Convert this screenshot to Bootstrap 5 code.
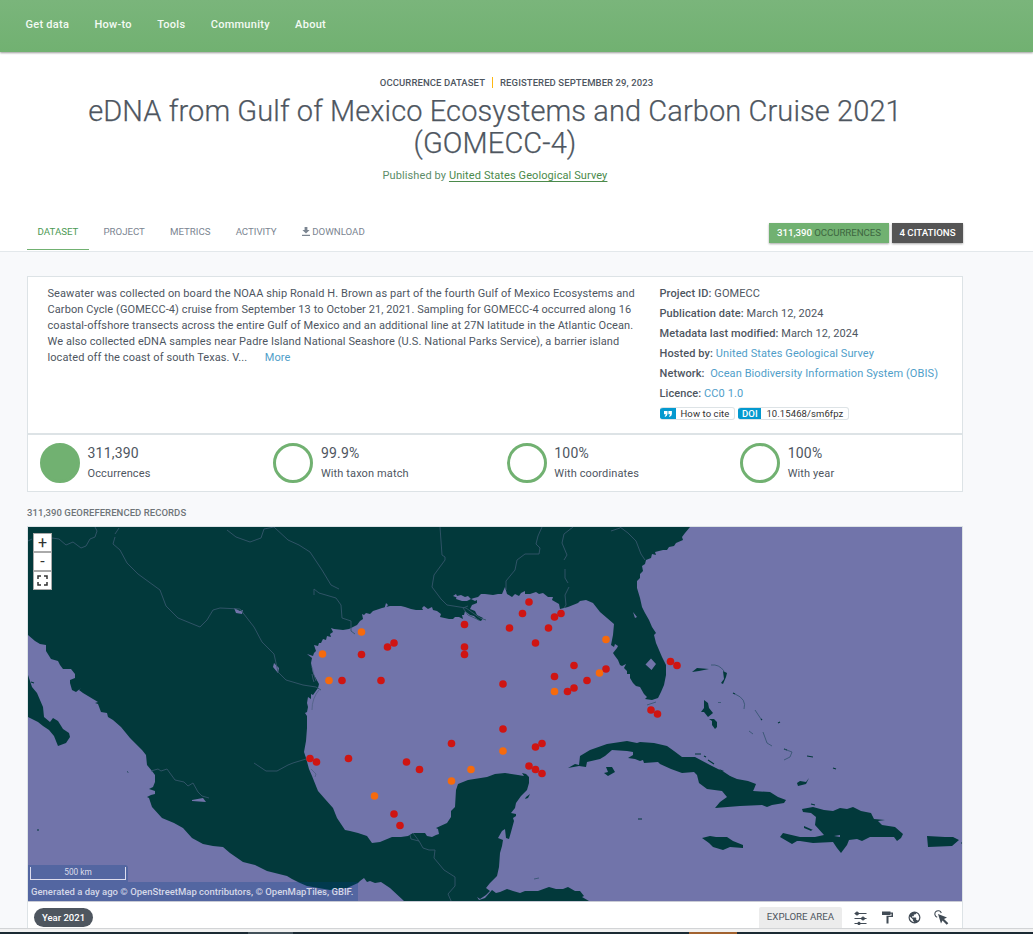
<!DOCTYPE html>
<html lang="en">
<head>
<meta charset="utf-8">
<meta name="viewport" content="width=device-width, initial-scale=1">
<title>eDNA from Gulf of Mexico Ecosystems and Carbon Cruise 2021 (GOMECC-4)</title>
<link href="https://cdn.jsdelivr.net/npm/bootstrap@5.3.0/dist/css/bootstrap.min.css" rel="stylesheet">
<style>
body{font-family:Roboto,"Liberation Sans",sans-serif;font-size:11px;line-height:16px;color:#4e565f;background:#f8f9fb;height:934px;overflow:hidden}
a{text-decoration:none;color:#509ec9}
.topbar{height:52px;background:linear-gradient(#7ab57b,#71b171);box-shadow:0 1px 2px rgba(0,0,0,.4);position:relative}
.topbar .nav{padding:17px 0 0 25.5px;gap:25.3px}
.topbar a{color:#f3faf3;font-weight:500;font-size:11px;line-height:16px;letter-spacing:.27px}
.wrap{width:936px;margin-left:27px}
.hero{height:200px;background:#fff;border-bottom:1px solid #e3e8eb}
.kicker{font-size:9.5px;font-weight:500;padding:23px 0 0 43px;line-height:16px;white-space:nowrap;letter-spacing:.09px}
.kicker span{display:inline-block;line-height:11px}
.kicker span+span{border-left:1px solid #fdb813;margin-left:7px;padding-left:7px}
h1{font-size:29px;line-height:32px;font-weight:300;margin:4px 0 9px;color:#4e565f;letter-spacing:.1px;white-space:nowrap;-webkit-text-stroke:.25px #4e565f}
.pub{color:#5c8c68;letter-spacing:.1px}
.pub a{color:#4b8a4b;text-decoration:underline;text-underline-offset:1.5px}
.tabs{height:38px;margin-top:28px;font-size:9.7px}
.tabs .nav a{display:block;padding:12px 10.6px 0;height:38px;color:#7b8591;line-height:16px;margin-right:4px;white-space:nowrap;letter-spacing:-.02px}
.tabs .nav a.active{color:#4c9a54;border-bottom:1px solid #71b171}
.count{height:20px;line-height:20px;width:120px;text-align:center;font-weight:500;color:#fff;background:#71b171;box-shadow:0 1px 2px rgba(0,0,0,.35);white-space:nowrap;font-size:9.7px;letter-spacing:-.07px}
.count i{font-style:normal;font-weight:400;color:#3d6640}
.count.dark{background:#555;width:71px;letter-spacing:0}
.panel{background:#fff;border:1px solid #dde3e6}
.about{height:158px;margin-top:24px;padding:9px 0 0 19.5px}
.desc{width:612px;white-space:nowrap;letter-spacing:.087px}
.facts{line-height:20px;margin-top:-2px;white-space:nowrap;letter-spacing:.09px}
.facts b{font-weight:500}
.chip{height:13px;line-height:11px;border:1px solid #dde3e6;border-left:0;border-radius:3px;font-size:9.5px;color:#333;padding-right:5px;overflow:hidden}
.chip span{background:#0499cf;color:#fff;font-weight:500;margin:-1px 5px -1px 0;display:flex;align-items:center;justify-content:center}
.stats{height:58px;padding:8px 0 0 12px}
.stat{flex:0 0 233.4px;letter-spacing:.12px}
.ring{width:40px;height:40px;border-radius:50%;border:3px solid #71b171;margin-right:7.5px}
.big-n{font-size:14px;line-height:20px;letter-spacing:.2px}
.cap{font-size:9.5px;font-weight:500;color:#6e7478;line-height:14px;margin:14px 0 6px;letter-spacing:.06px}
.mapbox{height:402px;border-bottom:0}
.mapview{height:375px;border-bottom:1px solid #c9cbd5;position:relative}
.mapview svg.chart{display:block;width:934px;height:374px}
.zooms{position:absolute;left:5px;top:6px;width:19px}
.zooms button{display:flex;width:19px;height:19px;border:1px solid #aaa;background:#fff;align-items:center;justify-content:center;color:#333;padding:0;font-size:16px;line-height:1;font-weight:400}
.scale{position:absolute;left:0;bottom:19px;width:100px;height:17px;background:rgba(0,60,136,.26);border-radius:0 3px 0 0}
.scale div{position:absolute;left:2px;top:2px;width:96px;height:13px;border:1px solid #dde;border-top:0;text-align:center;color:#dcdcea;font-size:8.300px;line-height:11px}
.attr{position:absolute;left:0;bottom:0;width:330px;height:19px;background:rgba(0,60,136,.26);color:#d5d8e8;font-size:9.5px;line-height:19px;padding-left:3px;font-weight:500;white-space:nowrap}
.mapfoot{height:26px}
.year{background:#4e565f;color:#fff;border-radius:10px;height:19px;line-height:19px;padding:0 8px;font-weight:500;font-size:9.5px;margin:6px 0 0 6px}
.explore{background:#ececec;width:83px;height:21px;line-height:19px;text-align:center;font-size:9.7px;margin-top:5px;border-radius:2px 2px 0 0}
.tools svg{display:block;margin-top:8.5px}
.edge{height:6px;border-top:1px solid #d2d4d6;background:#f1f1f1}
.task{height:2px;margin-top:3px;background:#1b2a33}
.task i{height:2px}
</style>
</head>
<body>
<header class="topbar">
<nav class="nav"><a href="#">Get data</a><a href="#">How-to</a><a href="#">Tools</a><a href="#">Community</a><a href="#">About</a></nav>
</header>
<section class="hero">
<div class="wrap">
<div class="text-center">
<div class="kicker"><span>OCCURRENCE DATASET</span><span>REGISTERED SEPTEMBER 29, 2023</span></div>
<h1>eDNA from Gulf of Mexico Ecosystems and Carbon Cruise 2021<br>(GOMECC-4)</h1>
<div class="pub">Published by <a href="#">United States Geological Survey</a></div>
</div>
<div class="tabs d-flex justify-content-between">
<nav class="nav flex-nowrap"><a class="active" href="#">DATASET</a><a href="#">PROJECT</a><a href="#">METRICS</a><a href="#">ACTIVITY</a><a href="#"><svg width="8" height="9" viewBox="0 0 8 9" style="vertical-align:-1px"><path d="M2.6 0h2.8v3H7.6L4 6.4.4 3h2.200zM0 7.700h8V9H0z" fill="#7b8591"/></svg> DOWNLOAD</a></nav>
<div class="d-flex" style="gap:3px;padding-top:11px"><span class="count">311,390 <i>OCCURRENCES</i></span><span class="count dark">4 CITATIONS</span></div>
</div>
</div>
</section>
<main class="wrap">
<section class="panel about d-flex">
<div class="desc">Seawater was collected on board the NOAA ship Ronald H. Brown as part of the fourth Gulf of Mexico Ecosystems and<br>Carbon Cycle (GOMECC-4) cruise from September 13 to October 21, 2021. Sampling for GOMECC-4 occurred along 16<br>coastal-offshore transects across the entire Gulf of Mexico and an additional line at 27N latitude in the Atlantic Ocean.<br>We also collected eDNA samples near Padre Island National Seashore (U.S. National Parks Service), a barrier island<br>located off the coast of south Texas. V...<a href="#" style="margin-left:17.5px">More</a></div>
<div class="facts">
<div><b>Project ID:</b> GOMECC</div>
<div><b>Publication date:</b> March 12, 2024</div>
<div><b>Metadata last modified:</b> March 12, 2024</div>
<div><b>Hosted by:</b> <a href="#">United States Geological Survey</a></div>
<div><b>Network:</b>&nbsp; <a href="#">Ocean Biodiversity Information System (OBIS)</a></div>
<div><b>Licence:</b> <a href="#">CC0 1.0</a></div>
<div class="d-flex" style="gap:3px;margin-top:3px"><div class="chip d-flex"><span style="width:16px"><svg width="8" height="6" viewBox="0 0 8 6" fill="#fff"><path d="M0 0h3.500v3Q3.500 5.200 1 6L.7 5Q1.700 4.500 1.800 3.300H0zM4.400 0h3.500v3Q7.900 5.200 5.400 6L5.100 5Q6.100 4.500 6.200 3.300H4.400z"/></svg></span>How to cite</div><div class="chip d-flex"><span style="width:23px">DOI</span>10.15468/sm6fpz</div></div>
</div>
</section>
<section class="panel stats d-flex">
<div class="stat d-flex"><div class="ring" style="background:#71b171"></div><div><div class="big-n">311,390</div><div class="lh-lg">Occurrences</div></div></div>
<div class="stat d-flex"><div class="ring"></div><div><div class="big-n">99.9%</div><div class="lh-lg">With taxon match</div></div></div>
<div class="stat d-flex"><div class="ring"></div><div><div class="big-n">100%</div><div class="lh-lg">With coordinates</div></div></div>
<div class="stat d-flex"><div class="ring"></div><div><div class="big-n">100%</div><div class="lh-lg">With year</div></div></div>
</section>
<div class="cap">311,390 GEOREFERENCED RECORDS</div>
<section class="panel mapbox">
<div class="mapview">
<svg class="chart" viewBox="28 527 934 374">
<rect x="28" y="527" width="934" height="374" fill="#7174aa"/>
<g fill="#02393b">
<path d="M28 527H690L685 533 682 537 683 540 676 543 674 546 669 547 667 550 663 550 655 552 656 555 652 554 651 558 646 560 645 564 642 566 643 571 640 574 640 578 637 581 637 588 640 598 642 607 645 613 649 620 652 627 656 633 654 635 656 643 662 657 666 665 666 675 664 685 661 692 658 698 652 700 645 699 647 697 644 694 640 687 636 686 633 683 630 678 630 674 627 674 627 671 624 668 626 664 622 666 620 665 618 660 615 656 613 653 617 648 618 646 615 644 614 647 611 645 613 635 614 624 607 618 600 612 593 603 586 600 580 601 578 603 568 607 560 609 559 604 552 600 553 597 548 597 543 593 539 594 536 592 530 594 525 594 525 591 521 593 519 596 515 594 512 597 507 594 505 587 502 594 498 594 493 595 485 594 481 594 478 597 474 598 471 599 468 596 465 597 461 595 457 596 456 599 462 601 467 601 471 599 475 601 477 600 477 603 472 605 470 609 475 611 477 615 483 618 481 621 478 620 474 616 470 615 465 611 464 615 462 615 463 619 459 617 455 617 453 619 449 619 440 617 441 614 437 611 433 610 432 607 428 609 424 606 422 608 423 610 416 610 411 609 405 607 401 606 390 606 382 608 373 611 370 614 366 613 364 615 362 614 363 619 360 621 357 625 349 629 343 630 334 629 331 628 333 632 330 634 331 637 327 636 326 640 323 639 321 643 319 643 318 646 314 645 316 651 314 653 313 656 307 654 312 658 311 663 313 673 319 684 318 688 313 695 311 694 311 699 308 697 307 703 308 707 307 712 305 713 307 716 307 728 306 741 304 752 306 758 309 769 312 776 318 791 325 799 333 808 337 818 345 830 350 831 358 833 367 836 372 843 380 842 392 837 401 837 408 836 413 833 425 833 427 836 432 837 436 835 439 834 438 829 436 828 447 823 451 817 451 811 455 807 456 790 458 784 468 780 487 777 495 774 505 773 518 775 524 776 522 773 526 774 529 777 529 783 527 790 521 796 516 803 515 808 511 813 516 814 516 816 513 818 514 821 511 832 509 839 506 838 505 829 502 831 498 838 503 840 502 846 500 853 499 867 497 876 490 883 486 888 490 891 486 895 480 899 477 897 479 900 485 898 492 890 496 893 500 892 507 889 513 891 520 893 525 891 538 891 549 887 556 889 563 889 568 887 575 891 580 891 584 896 582 897 589 901H404L390 888 381 882 375 883 370 881 367 882 364 878 360 881 358 883 347 888 330 890 307 886 300 883 292 879 287 876 267 871 255 865 243 862 230 853 223 847 213 846 203 844 192 838 183 828 174 823 162 818 152 807 149 798 147 797 151 795 155 794 155 791 149 789 153 787 155 782 155 775 152 771 147 765 146 755 142 750 130 738 121 727 113 720 108 717 107 713 101 712 98 704 95 703 98 702 83 693 79 690 81 688 76 692 72 690 70 683 70 680 75 678 75 674 71 669 63 669 60 665 58 661 51 659 46 651 46 645 40 644 35 641 28 635Z"/>
<path d="M28 675L32 687 37 693 43 707 44 717 50 722 53 718 58 721 63 729 69 733 70 737 66 743 58 746 54 736 49 730 43 726 38 722 28 717Z"/>
<path d="M568 768L575 764 579 765 580 756 590 750 607 744 627 741 637 743 640 742 654 743 667 746 674 751 682 757 695 757 710 765 724 772 730 776 737 779 748 781 756 784 754 789 753 791 770 792 778 797 786 800 784 803 772 805 767 807 762 805 740 806 715 808 720 802 727 797 722 791 707 789 699 783 697 775 694 772 682 773 671 769 660 764 658 762 644 763 643 760 640 761 635 759 628 758 633 755 633 752 627 751 612 750 605 756 600 759 587 762 586 767 579 766Z"/>
<path d="M606 767L612 767 615 772 608 776 604 773 608 772ZM530 794L526 797 525 799 528 798ZM702 838L710 836 716 837 727 837 733 841 743 845 743 848 730 847 723 850 713 847 709 843Z"/>
<path d="M802 809L813 807 824 810 833 811 840 808 847 809 853 807 861 811 871 813 874 819 885 820 878 821 882 825 895 827 903 834 901 838 897 841 894 837 870 837 862 841 857 839 849 840 847 845 841 853 837 848 833 842 813 843 800 841 797 841 792 844 780 837 783 833 800 837 815 837 824 835 815 825 816 817 811 813 803 812Z"/>
<path d="M927 836L945 837 953 837 959 840 952 846 928 847ZM797 783L800 781 806 782 809 778 806 784 798 786ZM804 826L813 830 809 830 804 828ZM704 700L708 703 709 708 713 713 708 717 704 712 701 712 704 708ZM709 719L714 719 717 722 717 727 715 729 712 725 712 721ZM692 672L697 668 709 669 699 671ZM723 671L727 673 726 677 723 684 721 683 724 679ZM719 769l5 2-2 1zM724 773l7 4-3 2zM127 771l2 2-2-1zM807 829l5 1-1 1z"/>
<path d="M695 754l6 0M704 756l2 1M708 760l6 4M784 749l3 1M807 756l6 1M833 768l3 1M638 819l4 0M778 723l2-1M733 693l2 1M761 719l1 1M811 804l4 1M961 843l2 0M37 830l2 0M31 682l3 1" stroke="#02393b" stroke-width="1.200" fill="none"/>
<path d="M711 665q8-1 13 6M735 694q12 5 9 15M755 710l6 9M763 732l4 11 5 3M784 749l8 3-2 5-6 3M749 731l4 3M534 879l5-1M647 705l9-3M718 702.500l3 0" stroke="#31536d" stroke-width=".8" fill="none"/>
</g>
<path d="M651 658.500l5 5.500-4.500 6-6-5.500zM234 608l6 3 3-1-1 4-6-1zM274 663l5 5-1 5-5-6zM192 800l11-2 3 4-14-1zM386 603l2 2-4 5zM453 596l3-2 2 4zM633 612l4 5-2 1zM834 836l6-1v2z" fill="#7174aa"/>
<g fill="none" stroke="#34566b" stroke-width=".9">
<path d="M28 541l4-2M52 538l7 1 7 6 7-3 8 6 5-2 4-7 5-2 2-6-2-4M119 528l-4 6M115 537l-2 7 7 6 7 13 11 11 22 16 6 16 12 12 22 9 7-7 6-10 7-2 20 1 14 18 8 15 12 12 4 18 8 8 17 5 13 2 5 3"/>
<path d="M227 530l9 7 14 5 11-4 3-9 10-2 14 13 11 5 11 7 12 18 9 15 8 4M314 595v-6l5 4 17 5 5 7 1 13 9 3v10l4 3"/>
<path d="M440 527l2 28 3 2v3l-11 15-2 12 9 12 6 6 19 3 14 10 6 2M468 606l-5 2 5 7 11 5"/>
<path d="M542 527l-4 9-2 8M536 544l4 4-1 6-14 0-8 6-2 10-9 11v9M573 527l-9 7-2 9 5 12-3 5M565 569v9l3 5M569 587l-4 8 1 10-2 3M620 527l8 6 8 8 5 13 4 6"/>
<path d="M151 771l7-2 3 2 6-2 8 11 9 2 4 4 5-3 5 9 4 4 7 2M254 763l12 8h11l11-6 5-2 13-4M410 835l1 4 8 2 4 7 6 2 6 0-1 8 10 12 11 7v9l-7 8 4 9M413 833l6 8M611 531l9-3"/>
</g>
<path d="M312 667q2 9 4 14M312 674q1 6 2 8M319 690q-7 8-7 20M311 769l5 5-1 3" fill="none" stroke="#4a5d80" stroke-width=".7"/>
<g id="sites"></g>
</svg>
<div class="zooms"><button>+</button><button>-</button><button><svg width="11" height="11" viewBox="0 0 11 11" fill="none" stroke="#333" stroke-width="1.500"><path d="M1 4V1h3M7 1h3v3M10 7v3H7M4 10H1V7"/></svg></button></div>
<div class="scale"><div>500 km</div></div>
<div class="attr">Generated a day ago © OpenStreetMap contributors, © OpenMapTiles, GBIF.</div>
</div>
<div class="mapfoot d-flex justify-content-between">
<span class="year">Year 2021</span>
<div class="tools d-flex"><span class="explore">EXPLORE AREA</span>
<svg style="margin-left:12px" width="13" height="14" viewBox="0 0 13 14" fill="#414b55" stroke="#414b55"><path d="M.5 2.500h12M.5 7.500h12M.5 12.500h12" stroke-width="1.100"/><circle cx="3" cy="2.500" r="1.500"/><circle cx="9" cy="7.500" r="1.500"/><circle cx="5" cy="12.500" r="1.300"/></svg>
<svg style="margin-left:15px" width="11" height="13" viewBox="0 0 11 13" fill="#414b55"><path d="M0 .5h8.500v1H11V6H6.500v6.500h-2V4.800h5V2.700h-1V4H0z"/></svg>
<svg style="margin-left:15px" width="13" height="13" viewBox="0 0 24 24" fill="#414b55"><path d="M12 1a11 11 0 1 0 0 22 11 11 0 0 0 0-22zm-1.500 19.600A8.700 8.700 0 0 1 3.500 10l5.600 5.500v1.200c0 1 .5 2 1.400 2zm7.800-2.700c-.3-.9-1.100-1.500-2.100-1.500h-1v-3.300c0-.6-.5-1.100-1.100-1.100H7.500V9.800h2.200c.6 0 1.100-.5 1.100-1.100V6.500H13c1.200 0 2.200-1 2.200-2.200v-.4a8.700 8.700 0 0 1 3.100 14z"/></svg>
<svg style="margin:8px 13px 0 13px" width="15" height="15" viewBox="0 0 15 15" fill="#414b55"><path d="M4 4l9 3.400-3 1.700 4.300 4.200-1.600 1.500-4.200-4.200-1.500 3z"/><path d="M3.200 7.200A3.300 3.300 0 1 1 7.300 3" fill="none" stroke="#414b55" stroke-width="1.100"/></svg>
</div>
</div>
</section>
</main>
<footer class="edge"><div class="task d-flex"><i style="width:45px;margin-left:248px;background:#43515a"></i><i style="width:48px;margin-left:396px;background:#a2622f"></i></div></footer>
<script src="https://cdn.jsdelivr.net/npm/bootstrap@5.3.0/dist/js/bootstrap.bundle.min.js"></script>
<script>
const red=[[529,602],[522.5,613.5],[509.500,628],[554.500,617],[561,613.500],[548.500,628],[535.500,643],[464.500,624.500],[464.500,647],[464.500,654.500],[394,643],[387.500,647],[361.500,654.500],[342,680.500],[381,680.500],[503,684],[574,665.500],[554.500,676.500],[587,680.500],[606,669],[574,688],[567.500,691.500],[670.500,661.500],[677,665.500],[651,710],[657.500,714],[503,729],[451.500,743.500],[310,758.500],[316.500,762],[348.500,758.500],[406.500,762],[419.500,769.500],[535.500,747],[542,743.500],[529,766],[535.500,769.500],[542,773.500],[394,814],[400,825.500]];
const orange=[[361.500,632],[322.500,654],[329,680.500],[606,639.500],[599.500,673],[554.500,691.500],[503,751],[471,769.500],[451.500,781],[374.500,796]];
document.getElementById("sites").innerHTML=[[red,"#cf1512"],[orange,"#f66a0c"]].map(([pts,c])=>pts.map(([x,y])=>`<circle cx="${x}" cy="${y}" r="3.800" fill="${c}"/>`).join("")).join("");
</script>
</body>
</html>
